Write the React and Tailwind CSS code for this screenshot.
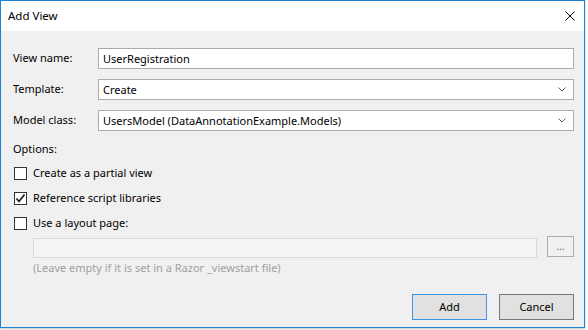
import React from "react";

function Chevron() {
  return (
    <svg width="8" height="5" viewBox="0 0 8 5" className="shrink-0">
      <path d="M0.5 0.5 L4 4 L7.5 0.5" fill="none" stroke="#606060" strokeWidth="1" />
    </svg>
  );
}

function Checkbox({ checked }) {
  return (
    <div className="w-[13px] h-[13px] ml-[1px] border border-[#333333] bg-white flex items-center justify-center shrink-0">
      {checked && (
        <svg width="11" height="11" viewBox="0 0 11 11">
          <path d="M1.5 5.5 L4 8.5 L9.5 1.5" fill="none" stroke="#1a1a1a" strokeWidth="1.7" />
        </svg>
      )}
    </div>
  );
}

export default function App() {
  const fields = [
    { label: "View name:", value: "UserRegistration", combo: false },
    { label: "Template:", value: "Create", combo: true },
    { label: "Model class:", value: "UsersModel (DataAnnotationExample.Models)", combo: true },
  ];

  const options = [
    { label: "Create as a partial view", checked: false },
    { label: "Reference script libraries", checked: true },
    { label: "Use a layout page:", checked: false },
  ];

  return (
    <div className="w-[588px] h-[330px] bg-white text-[11px] text-black font-['Noto_Sans',sans-serif]">
      <div className="w-[585px] h-[328px] border border-[#1883d7] bg-[#f0f0f0] flex flex-col shadow-[0_1px_2px_rgba(0,0,0,0.25)]">
        {/* Title bar */}
        <div className="h-[30px] bg-white flex items-center justify-between pl-[7px] pr-[9px] shrink-0">
          <span className="text-[11.5px]">Add View</span>
          <svg width="10" height="10" viewBox="0 0 10 10">
            <path d="M0.5 0.5 L9.5 9.5 M9.5 0.5 L0.5 9.5" stroke="#000" strokeWidth="1" />
          </svg>
        </div>

        {/* Body */}
        <div className="flex flex-col pt-[17px] pl-[12px] pr-[10px]">
          {fields.map((f, i) => (
            <div key={i} className={`flex items-center h-[21px] ${i > 0 ? "mt-[10px]" : ""}`}>
              <span className="w-[85px] shrink-0">{f.label}</span>
              <div className="flex-1 h-[21px] border border-[#acacac] bg-white flex items-center justify-between pl-[4px] pr-[7px]">
                <span className="leading-none">{f.value}</span>
                {f.combo && <Chevron />}
              </div>
            </div>
          ))}

          <div className="mt-[10px] h-[16px] leading-[16px]">Options:</div>

          <div className="mt-[4px] flex flex-col">
            {options.map((o, i) => (
              <div key={i} className="h-[25px] flex items-center gap-[6px]">
                <Checkbox checked={o.checked} />
                <span>{o.label}</span>
              </div>
            ))}
          </div>

          <div className="mt-[1px] h-[21px] pl-[20px] flex items-center gap-[10px]">
            <div className="w-[504px] h-[20px] border border-[#d9d9d9] bg-[#f4f4f4]" />
            <div className="w-[27px] h-[21px] -mt-[2px] border border-[#adadad] bg-[#f0f0f0] flex items-center justify-center text-[#707070] text-[10px] leading-none pb-[2px]">
              ...
            </div>
          </div>

          <div className="mt-[2px] h-[16px] leading-[16px] pl-[20px] text-[#a0a0a0]">
            (Leave empty if it is set in a Razor _viewstart file)
          </div>

          <div className="mt-[18px] flex justify-end gap-[12px]">
            <button className="w-[75px] h-[26px] border border-[#3c94e6] bg-[#e1e1e1]">Add</button>
            <button className="w-[75px] h-[26px] border border-[#777777] bg-[#e1e1e1]">Cancel</button>
          </div>
        </div>
      </div>
    </div>
  );
}
